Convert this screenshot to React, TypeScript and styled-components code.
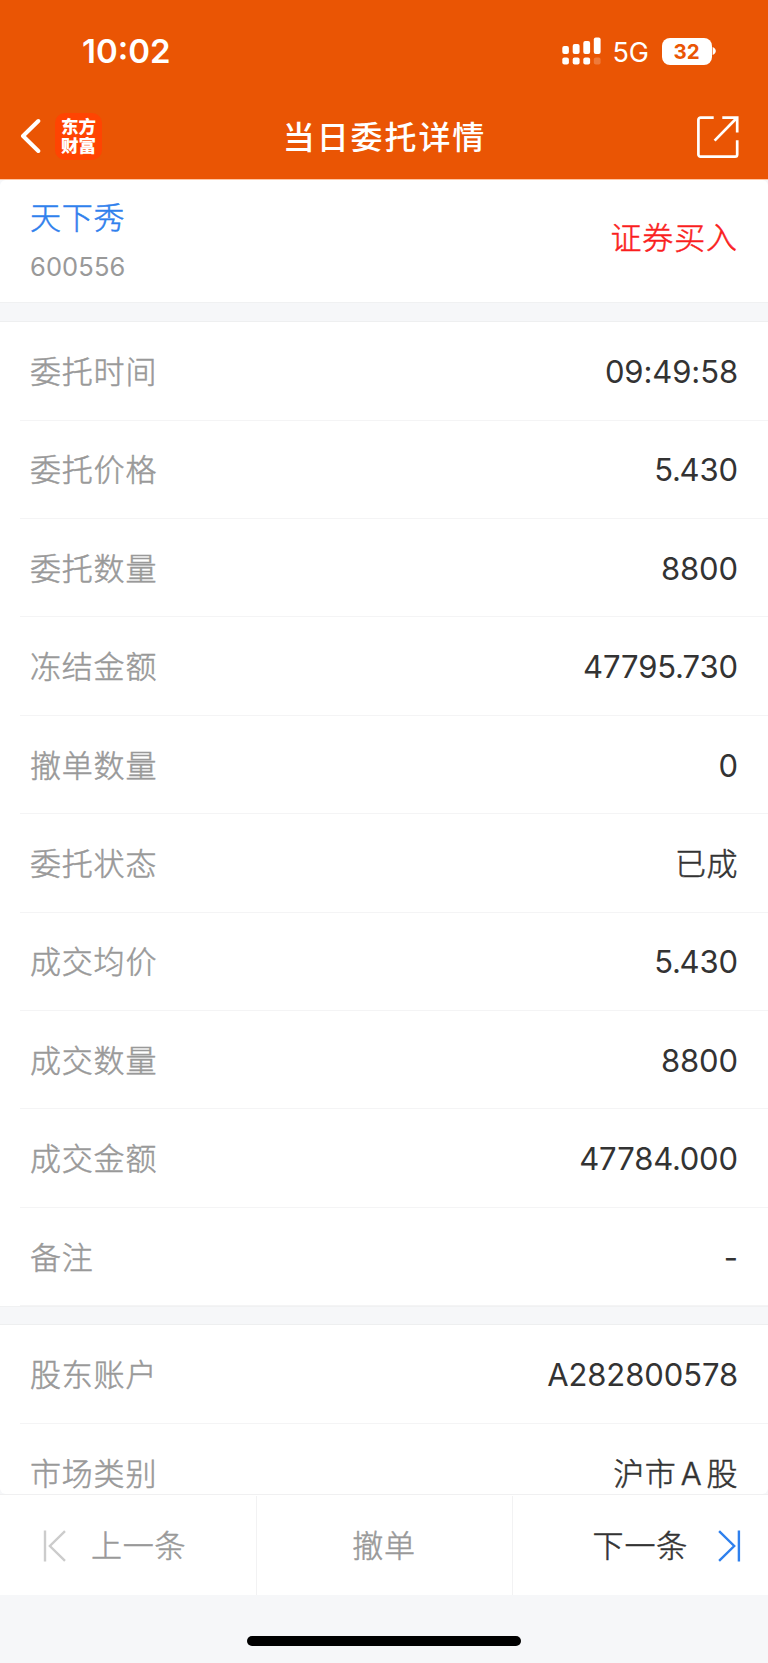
import React from 'react';
import styled, { createGlobalStyle } from 'styled-components';

const GlobalStyle = createGlobalStyle`
  * { box-sizing: border-box; }
  body {
    margin: 0;
    background: #f6f7f9;
    font-family: Inter, "Noto Sans CJK SC", sans-serif;
    color: #333;
  }
`;

const Screen = styled.div`
  width: 768px;
  height: 1663px;
  display: flex;
  flex-direction: column;
  overflow: hidden;
`;

const Header = styled.header`
  height: 179px;
  flex: none;
  background: #ea5504;
  color: #fff;
`;

const StatusBar = styled.div`
  height: 100px;
  padding: 2px 52px 0 82px;
  display: flex;
  align-items: center;
`;

const Clock = styled.span`
  flex: 1;
  font-size: 33px;
  font-weight: 600;
  letter-spacing: 0;
`;

const Network = styled.span`
  margin: 2px 13px 0 12px;
  font-size: 27px;
  letter-spacing: -0.3px;
`;

const Battery = styled.span`
  width: 50px;
  height: 27px;
  border-radius: 8px;
  background: #fff;
  color: #ea5504;
  font-size: 20.5px;
  line-height: 28px;
  font-weight: 700;
  text-align: center;
`;

const NavBar = styled.nav`
  height: 73px;
  display: grid;
  grid-template-columns: 1fr auto 1fr;
  align-items: center;
  padding: 0 29px 0 20px;
`;

const NavLeft = styled.div`
  display: flex;
  align-items: center;
  gap: 14px;
  padding-bottom: 1px;
`;

const Brand = styled.div`
  width: 47px;
  height: 47px;
  border-radius: 10px;
  background: #ff4402;
  display: flex;
  flex-direction: column;
  align-items: center;
  justify-content: center;
  padding-bottom: 2px;
  font: 900 17.5px/19px "Noto Sans CJK SC", sans-serif;
`;

const Title = styled.h1`
  margin: 2px 0 0 10px;
  font-size: 32px;
  line-height: 48px;
  font-weight: 500;
  letter-spacing: 1.9px;
`;

const NavRight = styled.div`
  display: flex;
  justify-content: flex-end;
`;

const Content = styled.main`
  height: 1315px;
  flex: none;
  overflow: hidden;
  border-top: 1px solid #ffc5a3;
  border-radius: 0 0 6px 6px;
`;

const Summary = styled.section`
  height: 122px;
  padding: 0 31px 0 30px;
  background: #fff;
  border-radius: 6px 6px 0 0;
  display: flex;
  justify-content: space-between;
`;

const StockName = styled.div`
  margin-top: 15px;
  font-size: 31px;
  line-height: 46px;
  font-weight: 300;
  -webkit-text-stroke: 0.5px currentColor;
  letter-spacing: 0.8px;
  color: #2f80ed;
`;

const StockCode = styled.div`
  margin-top: 10px;
  font-size: 25.5px;
  line-height: 32px;
  letter-spacing: 0.1px;
  color: #999;
`;

const Side = styled.div`
  margin-top: 35px;
  font-size: 31px;
  line-height: 46px;
  font-weight: 300;
  -webkit-text-stroke: 0.5px currentColor;
  letter-spacing: 0.9px;
  margin-right: -1px;
  color: #fa1e1e;
`;

const Gap = styled.div<{ $height: number }>`
  height: ${p => p.$height}px;
  border-top: 1px solid #f0f1f2;
  border-bottom: 1px solid #eeeff0;
`;

const Group = styled.section`
  padding-top: 0.3px;
  background: #fff;
`;

const Row = styled.div`
  height: 98.4px;
  margin-left: 20px;
  padding: 2px 30px 0 10px;
  display: flex;
  align-items: center;
  justify-content: space-between;
  border-bottom: 1px solid #f4f4f5;
`;

const Label = styled.span`
  font-size: 31px;
  line-height: 46px;
  font-weight: 300;
  -webkit-text-stroke: 0.5px currentColor;
  letter-spacing: 0.8px;
  color: #999;
`;

const Value = styled.span<{ $cjk: boolean }>`
  font-size: 31px;
  line-height: 46px;
  font-weight: ${p => (p.$cjk ? 300 : 400)};
  -webkit-text-stroke: ${p => (p.$cjk ? '0.5px currentColor' : '0')};
  letter-spacing: ${p => (p.$cjk ? '0.5px' : '-0.1px')};
  word-spacing: -4.8px;
`;

const Point = styled.span`
  margin: 0 -1.2px;
`;

const Footer = styled.footer`
  height: 101px;
  flex: none;
  display: grid;
  grid-template-columns: repeat(3, 1fr);
  background: #fff;
  border-top: 1px solid #f0f0f1;
  padding-top: 1px;
`;

const Action = styled.button<{ $active?: boolean; $align?: string }>`
  border: 0;
  border-left: 1px solid #f2f2f3;
  background: none;
  padding: 0 26px 0 42px;
  display: flex;
  align-items: center;
  justify-content: ${p => p.$align ?? 'center'};
  gap: 25px;
  font: 300 31px/46px Inter, "Noto Sans CJK SC", sans-serif;
  -webkit-text-stroke: 0.5px currentColor;
  letter-spacing: 0.8px;
  color: ${p => (p.$active ? '#333' : '#999')};
  &:nth-child(2) { padding: 0 1px 0 0; }
  &:first-child { border-left: 0; }
  &:last-child { gap: 30px; }
`;

const HomeArea = styled.div`
  flex: 1;
  display: flex;
  justify-content: center;
  padding-top: 41px;
`;

const HomeIndicator = styled.div`
  width: 274px;
  height: 10px;
  border-radius: 5px;
  background: #000;
`;

const orderRows: [string, string][] = [
  ['委托时间', '09:49:58'],
  ['委托价格', '5.430'],
  ['委托数量', '8800'],
  ['冻结金额', '47795.730'],
  ['撤单数量', '0'],
  ['委托状态', '已成'],
  ['成交均价', '5.430'],
  ['成交数量', '8800'],
  ['成交金额', '47784.000'],
  ['备注', '-'],
];

const accountRows: [string, string][] = [
  ['股东账户', 'A282800578'],
  ['市场类别', '沪市 A 股'],
];

const Amount = ({ text }: { text: string }) => {
  const [whole, decimals] = text.split('.');
  return decimals ? <>{whole}<Point>.</Point>{decimals}</> : <>{text}</>;
};

const DetailGroup = ({ rows }: { rows: [string, string][] }) => (
  <Group>
    {rows.map(([label, value]) => (
      <Row key={label}>
        <Label>{label}</Label>
        <Value $cjk={/[\u4e00-\u9fff]/.test(value)}><Amount text={value} /></Value>
      </Row>
    ))}
  </Group>
);

const SignalIcon = () => (
  <svg width="39" height="28" viewBox="0 0 39 28" fill="#fff">
    <rect x="0.3" y="9" width="6.6" height="8" rx="2" />
    <rect x="10.7" y="7" width="6.9" height="10" rx="2" />
    <rect x="21.3" y="4" width="6.8" height="13" rx="2" />
    <rect x="31.8" y="0.5" width="6.8" height="16.5" rx="2" />
    <rect x="0.3" y="20.5" width="6.6" height="7" rx="2" />
    <rect x="10.7" y="20.5" width="6.9" height="7" rx="2" />
    <rect x="21.3" y="20.5" width="6.8" height="7" rx="2" />
    <rect x="31.8" y="20.5" width="6.8" height="7" rx="2" opacity="0.22" />
  </svg>
);

const TipShape = styled.svg`
  margin-left: 0.5px;
`;

const BatteryTip = () => (
  <TipShape width="4" height="10" viewBox="0 0 4 10">
    <path d="M0.6 1C2.7 2 3.8 3.2 3.8 5S2.7 8 0.6 9Z" fill="#fff" />
  </TipShape>
);

const BackIcon = () => (
  <svg width="21" height="36" viewBox="0 0 21 36" fill="none" stroke="#fff" strokeWidth="4" strokeLinecap="round" strokeLinejoin="round">
    <path d="M18.3 3L3 18l15.3 15" />
  </svg>
);

const ShareIcon = () => (
  <svg width="42" height="42" viewBox="0 0 42 42" fill="none" stroke="#fff" strokeWidth="2.7">
    <path d="M16.7 1.6H3.6a2.2 2.2 0 0 0-2.2 2.2v34.6a2.2 2.2 0 0 0 2.2 2.2h34.4a2.2 2.2 0 0 0 2.2-2.2V24.3" />
    <path d="M25.3 1.6H40.2V16.6M39.5 2.2L17.6 24.6" />
  </svg>
);

const StepIcon = ({ next }: { next?: boolean }) => (
  <svg width="24" height="32" viewBox="0 0 24 32" fill="none" stroke={next ? '#2f80ed' : '#ccc'} strokeWidth="2.4">
    {next
      ? <path d="M1.1 1.2L16.2 16 1.1 30.8M20.9 0.6V31.4" />
      : <path d="M23 1.2L7.9 16l15.1 14.8M3 0.6V31.4" />}
  </svg>
);

export default function App() {
  return (
    <>
      <GlobalStyle />
      <Screen>
        <Header>
          <StatusBar>
            <Clock>10:02</Clock>
            <SignalIcon />
            <Network>5G</Network>
            <Battery>32</Battery>
            <BatteryTip />
          </StatusBar>
          <NavBar>
            <NavLeft>
              <BackIcon />
              <Brand><span>东方</span><span>财富</span></Brand>
            </NavLeft>
            <Title>当日委托详情</Title>
            <NavRight><ShareIcon /></NavRight>
          </NavBar>
        </Header>
        <Content>
          <Summary>
            <div>
              <StockName>天下秀</StockName>
              <StockCode>600556</StockCode>
            </div>
            <Side>证券买入</Side>
          </Summary>
          <Gap $height={20} />
          <DetailGroup rows={orderRows} />
          <Gap $height={19} />
          <DetailGroup rows={accountRows} />
        </Content>
        <Footer>
          <Action $align="flex-start"><StepIcon />上一条</Action>
          <Action>撤单</Action>
          <Action $active $align="flex-end">下一条<StepIcon next /></Action>
        </Footer>
        <HomeArea><HomeIndicator /></HomeArea>
      </Screen>
    </>
  );
}
